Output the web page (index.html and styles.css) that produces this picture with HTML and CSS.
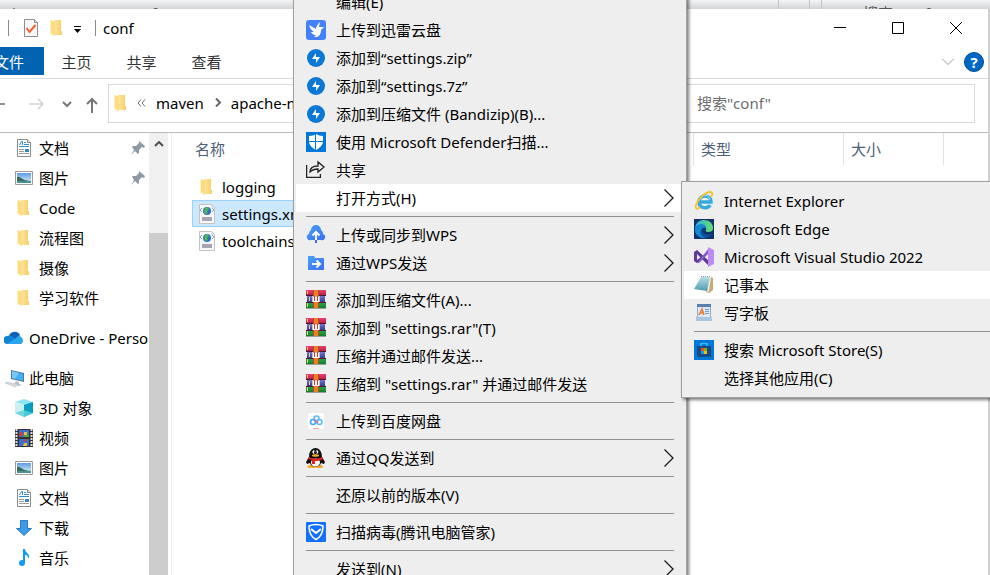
FILE: index.html
```html
<!DOCTYPE html>
<html lang="zh-CN">
<head>
    <meta charset="UTF-8">
    <meta name="viewport" content="width=device-width, initial-scale=1.0">
    <title>conf</title>
    <link rel="stylesheet" href="styles.css">
</head>
<body>

<svg class="sprite" aria-hidden="true">
    <defs>
        <linearGradient id="gFolder"><stop offset="0" stop-color="#ffe9a8"/><stop offset="1" stop-color="#f6cf66"/></linearGradient>
        <linearGradient id="gSky" x1="0" y1="0" x2="0" y2="1"><stop offset="0" stop-color="#5b9be6"/><stop offset="1" stop-color="#e4f3fb"/></linearGradient>
        <linearGradient id="gBlue" x1="0" y1="0" x2="1" y2="1"><stop offset="0" stop-color="#47a2f8"/><stop offset="1" stop-color="#3d6df5"/></linearGradient>
        <linearGradient id="gEdge" x1="0" y1="0" x2="1" y2="0"><stop offset="0" stop-color="#31b0e5"/><stop offset="1" stop-color="#63df6c"/></linearGradient>
        <linearGradient id="gNote" x1="0" y1="0" x2="0" y2="1"><stop offset="0" stop-color="#b8dde5"/><stop offset="1" stop-color="#4d9cae"/></linearGradient>
        <linearGradient id="gRed" x1="0" y1="0" x2="0" y2="1"><stop offset="0" stop-color="#ef4272"/><stop offset="1" stop-color="#b0173f"/></linearGradient>
        <linearGradient id="gIndigo" x1="0" y1="0" x2="0" y2="1"><stop offset="0" stop-color="#7373d0"/><stop offset="1" stop-color="#3b3b97"/></linearGradient>
        <linearGradient id="gGreen" x1="0" y1="0" x2="0" y2="1"><stop offset="0" stop-color="#2fb04e"/><stop offset="1" stop-color="#0f7d2c"/></linearGradient>
    </defs>
    <symbol id="folder" viewBox="0 0 18 18">
        <path fill="#f3cb62" d="M6 1h6v14H6z"/>
        <path fill="url(#gFolder)" d="M6 1h7v11h1v4H5z"/>
        <path fill="#fbdc83" d="M2 1h1l4 2v14l-4-2H2z"/>
        <path fill="#fff0bf" d="M2 1h1v13l3 2v1l-4-2z"/>
    </symbol>
    <symbol id="doc" viewBox="0 0 18 18">
        <path fill="#fff" stroke="#8b8b8b" d="M2.500 .5h10l3 3v14h-13z"/>
        <path fill="#e2e2e2" stroke="#8b8b8b" d="M12.500 .5v3h3"/>
        <path stroke="#2f8fce" fill="none" d="M4.500 6l2-3.500h1V6M9 3.500h2M9 5.500h5M4 7.500h10"/>
        <path stroke="#9b9b9b" d="M4 10.500h5M4 12.500h5M4 14.500h10"/>
        <path fill="#3c83c4" d="M10 10h4v3h-4z"/>
    </symbol>
    <symbol id="picture" viewBox="0 0 18 18">
        <path fill="#fff" stroke="#9b9b9b" d="M.5 2.500h17v13H.5z"/>
        <path fill="url(#gSky)" d="M2 4h14v10H2z"/>
        <path fill="#4b9193" d="M2 10l14 2v2H2z"/>
        <path fill="#386c59" d="M2 8c3-1 5 3 11 4H2z"/>
    </symbol>
    <symbol id="pin" viewBox="0 0 14 14">
        <path fill="#8d9aa6" d="M8 0l6 5-1 2-2-1-3 3 0 3-1 1-3-3-4 4 3-5-2-3 1-1 3 0 3-3z"/>
    </symbol>
    <symbol id="xml" viewBox="0 0 18 20">
        <path fill="#f8f8f8" stroke="#c3c3c3" d="M1.500 .5h12l3 3v16h-15z"/>
        <path fill="#ddd" d="M13 1l3 3h-3z"/>
        <circle cx="9" cy="7" r="4" fill="#2d6fc8"/>
        <path fill="#53b84e" d="M7 4l3-1 1 2-2 2 1 2-2 1-2-2z"/>
        <path stroke="#8aa0b5" fill="none" d="M4 4L2 6l2 2M14 4l2 2-2 2"/>
        <path fill="#a5a5b4" d="M4 13h10v4H4z"/>
    </symbol>
    <symbol id="winrar" viewBox="0 0 20 20">
        <path fill="url(#gRed)" d="M0 0h20v6H0z"/>
        <path fill="url(#gIndigo)" d="M1 6h18v6H1z"/>
        <path fill="url(#gGreen)" d="M0 12h20v6H0z"/>
        <path fill="#9aa59a" d="M0 18h20v1H0z"/>
        <path fill="#4a1534" d="M0 5h20v1H0zM0 12h20v1H0z"/>
        <path fill="#ecd06a" d="M1 1h1v3H1zM3 7h1v4H3zM1 13h1v4H1z"/>
        <path fill="#ef7d22" d="M7 0h6v18H7z"/>
        <path fill="#a8501f" d="M7 0h1v18H7zM12 0h1v18h-1z"/>
        <path fill="#d4bfb4" d="M6 6h8v6H6z"/>
        <path fill="#fff" d="M7 7h6v5H7z"/>
        <path fill="#c8402a" d="M8 6h1v5H8zM11 6h1v5h-1z"/>
    </symbol>
    <symbol id="bandizip" viewBox="0 0 20 20">
        <circle cx="10" cy="10" r="9" fill="#0a78d7"/>
        <path fill="#fff" d="M10 5v4h4l-4 6v-4H6z"/>
    </symbol>
    <symbol id="more" viewBox="0 0 10 18">
        <path fill="none" stroke="#1c1c1c" stroke-width="1.300" d="M.5 .5L9 9l-8.500 8.500"/>
    </symbol>
</svg>

<div class="desktop">
    <div class="back-window">
        <span>b</span>
        <span class="back-version">3/64 t</span>
        <span class="back-name">conf</span>
        <span class="back-refresh"></span>
        <span class="back-search">搜索"conf"</span>
    </div>

    <div class="window">
        <header class="titlebar">
            <span class="bar"></span>
            <svg class="quick-doc" viewBox="0 0 16 18">
                <path fill="#f7f7f7" stroke="#8f8f8f" d="M1.500 .5h10l3 3v14h-13z"/>
                <path fill="#ddd" stroke="#8f8f8f" d="M11.500 .5v3h3"/>
                <path fill="none" stroke="#f0622d" stroke-width="2" d="M3.500 9l3 4 6-7"/>
            </svg>
            <svg class="icon18 quick-folder"><use href="#folder"/></svg>
            <svg class="quick-caret" viewBox="0 0 8 8"><path d="M0 0h7v1H0zM0 3h7L3.500 7z"/></svg>
            <span class="bar"></span>
            <span class="title">conf</span>
            <div class="win-buttons">
                <button aria-label="最小化"><svg viewBox="0 0 12 12"><path d="M0 5.500h12"/></svg></button>
                <button aria-label="最大化"><svg viewBox="0 0 12 12"><path d="M.5 .5h11v11H.5z"/></svg></button>
                <button aria-label="关闭"><svg viewBox="0 0 12 12"><path d="M0 0l12 12M12 0L0 12"/></svg></button>
            </div>
        </header>

        <nav class="tabs">
            <button class="tab tab-file">文件</button>
            <button class="tab">主页</button>
            <button class="tab">共享</button>
            <button class="tab">查看</button>
            <div class="tabs-right">
                <svg class="expand" viewBox="0 0 12 7"><path d="M0 .5l6 6 6-6"/></svg>
                <button class="help" aria-label="帮助">?</button>
            </div>
        </nav>

        <div class="address-row">
            <svg class="arrows" viewBox="0 0 108 24">
                <path stroke="#6e6e6e" stroke-width="1.500" d="M0 12h5"/>
                <path stroke="#d3d3d3" stroke-width="1.500" d="M29 12h14M38 7l5 5-5 5"/>
                <path stroke="#777" stroke-width="2" d="M63 10l4 4 4-4"/>
                <path stroke="#777" stroke-width="2" d="M92 21V7M87 12l5-5 5 5"/>
            </svg>
            <div class="address">
                <svg class="icon18"><use href="#folder"/></svg>
                <svg class="crumb-back" viewBox="0 0 9 8"><path d="M4 .5L1 4l3 3.500M8 .5L5 4l3 3.500"/></svg>
                <span>maven</span>
                <svg class="crumb-sep" viewBox="0 0 6 9"><path d="M1 .5l4 4-4 4"/></svg>
                <span>apache-maven-3.8.4</span>
            </div>
            <input class="search" type="text" aria-label="搜索" placeholder='搜索"conf"'>
        </div>

        <div class="content">
            <aside class="tree">
                <a href="#"><svg class="icon18"><use href="#doc"/></svg>文档<svg class="pin"><use href="#pin"/></svg></a>
                <a href="#"><svg class="icon18"><use href="#picture"/></svg>图片<svg class="pin"><use href="#pin"/></svg></a>
                <a href="#"><svg class="icon18"><use href="#folder"/></svg>Code</a>
                <a href="#"><svg class="icon18"><use href="#folder"/></svg>流程图</a>
                <a href="#"><svg class="icon18"><use href="#folder"/></svg>摄像</a>
                <a href="#"><svg class="icon18"><use href="#folder"/></svg>学习软件</a>
                <a href="#" class="root">
                    <svg class="icon20" viewBox="0 0 20 20">
                        <path fill="#0b62b8" d="M5 8a6 6 0 0 1 11-1l-5 6z"/>
                        <path fill="#1282d7" d="M4 16a4 4 0 0 1-1-8 6 6 0 0 1 6 1l4 4-5 3z"/>
                        <path fill="#2aa7ec" d="M3 16l9-6c1-2 4-3 5-1a4 4 0 0 1 0 7z"/>
                    </svg>OneDrive - Personal</a>
                <a href="#" class="root">
                    <svg class="icon20" viewBox="0 0 20 20">
                        <path fill="#4d7795" d="M7 2l13 3v9L7 11z"/>
                        <path fill="#41b0f5" d="M8 3l11 3v7L8 10z"/>
                        <path fill="#77c8fa" d="M8 3l7 2-4 6-3-1z"/>
                        <path fill="#b9c1c8" d="M12 13l3 1v2l3 1-3 1-5-2z"/>
                        <path fill="#d5dadf" stroke="#b2bac2" stroke-width=".5" d="M1 15l3-1 10 3-3 2z"/>
                    </svg>此电脑</a>
                <a href="#">
                    <svg class="icon18" viewBox="0 0 18 18">
                        <path fill="#8ee5ee" d="M0 3l9-3 9 3-9 3z"/>
                        <path fill="#c9f1f2" d="M0 3l9 3v12l-9-4z"/>
                        <path fill="#14a8c8" d="M18 3L9 6v12l9-4z"/>
                        <path fill="#56cfd9" d="M0 14l9-3 9 3-9 4z" opacity=".8"/>
                        <path fill="#0797bd" d="M9 6l9-3v11l-9-3z" opacity=".7"/>
                    </svg>3D 对象</a>
                <a href="#">
                    <svg class="icon18" viewBox="0 0 18 18">
                        <path fill="#333" d="M0 0h18v18H0z"/>
                        <path stroke="#ddd" stroke-width="2" stroke-dasharray="2 1" d="M1.500 0v18M16.500 0v18"/>
                        <path fill="#3d6fd1" d="M4 1h10v7H4zM4 10h10v7H4z"/>
                        <path fill="#d43a3a" d="M4 5l3-3 1 5H4zM8 11l5-1-3 3z"/>
                        <path fill="#e9c22c" d="M9 3h3v3H9zM9 14h3v3H8z"/>
                        <path fill="#49a948" d="M9 6h5v2H8z"/>
                    </svg>视频</a>
                <a href="#"><svg class="icon18"><use href="#picture"/></svg>图片</a>
                <a href="#"><svg class="icon18"><use href="#doc"/></svg>文档</a>
                <a href="#">
                    <svg class="icon18" viewBox="0 0 18 18"><path fill="#3d9be9" stroke="#2b7cc4" d="M5.500 1.500h7v8h4L9 16.500 1.500 9.500h4z"/></svg>下载</a>
                <a href="#">
                    <svg class="icon18" viewBox="0 0 18 18">
                        <path fill="#109bf5" d="M8 0h2c0 4 5 4 4 9h-1c0-3-2-3-3-3v8H8z"/>
                        <ellipse cx="7" cy="14" rx="3" ry="3" fill="#109bf5"/>
                    </svg>音乐</a>
            </aside>
            <div class="scroll">
                <svg viewBox="0 0 10 6"><path d="M1 5l4-4 4 4"/></svg>
                <div class="thumb"></div>
            </div>
            <main class="files">
                <table>
                    <thead>
                        <tr><th class="col-name">名称</th><th class="col-type">类型</th><th class="col-size">大小</th><th></th></tr>
                    </thead>
                    <tbody>
                        <tr><td><span class="file"><svg class="icon18"><use href="#folder"/></svg>logging</span></td></tr>
                        <tr><td class="selected"><span class="file"><svg class="icon-file"><use href="#xml"/></svg>settings.xml</span></td></tr>
                        <tr><td><span class="file"><svg class="icon-file"><use href="#xml"/></svg>toolchains.xml</span></td></tr>
                    </tbody>
                </table>
            </main>
        </div>
    </div>

    <div class="menu context">
        <button class="item"><span class="ico"></span>编辑(E)</button>
        <button class="item"><svg class="ico" viewBox="0 0 20 20">
            <rect width="20" height="20" rx="3" fill="#4480fb"/>
            <path fill="#fff" d="M3 5l7 4c0-3 2-5 4-7l-1 5 5 0-3 3c0 3-1 6-4 7H8l2-2c-3 0-4-1-5-3h3C5 10 4 8 3 5z"/>
        </svg>上传到迅雷云盘</button>
        <button class="item"><svg class="ico"><use href="#bandizip"/></svg>添加到“settings.zip”</button>
        <button class="item"><svg class="ico"><use href="#bandizip"/></svg>添加到“settings.7z”</button>
        <button class="item"><svg class="ico"><use href="#bandizip"/></svg>添加到压缩文件 (Bandizip)(B)...</button>
        <button class="item"><svg class="ico" viewBox="0 0 20 20">
            <path fill="#0078d7" d="M0 0h20v20H0z"/>
            <path fill="#fff" d="M10 2c2 1 4 2 7 2v5c0 4-3 7-7 9-4-2-7-5-7-9V4c3 0 5-1 7-2z"/>
            <path stroke="#0078d7" d="M9.500 1v18M2 9.500h16"/>
        </svg>使用 Microsoft Defender扫描...</button>
        <button class="item"><svg class="ico" viewBox="0 0 20 20">
            <path fill="none" stroke="#222" stroke-width="1.300" d="M.6 5v12.400h13.800V14M4 12c0-4 3-6 8-6V2l6 5-6 5V9c-4 0-6 1-8 3z"/>
        </svg>共享</button>
        <button class="item active"><span class="ico"></span>打开方式(H)<svg class="more"><use href="#more"/></svg></button>
        <hr>
        <button class="item"><svg class="ico" viewBox="0 0 20 20">
            <path fill="url(#gBlue)" d="M5 15a3 3 0 0 1-2-6 4 4 0 0 1 2-4 5 5 0 0 1 10 0 4 4 0 0 1 2 4 3 3 0 0 1-2 6z"/>
            <path fill="none" stroke="#fff" stroke-width="2" d="M10 15V7M6.500 10.500L10 7l3.500 3.500"/>
            <path stroke="#3d6df5" stroke-width="2" d="M10 15v3"/>
        </svg>上传或同步到WPS<svg class="more"><use href="#more"/></svg></button>
        <button class="item"><svg class="ico" viewBox="0 0 20 20">
            <path fill="url(#gBlue)" d="M2 3h6l1 2h9v12H2z"/>
            <path fill="none" stroke="#fff" stroke-width="2" d="M6 11h8M10.500 7.500L14 11l-3.500 3.500"/>
        </svg>通过WPS发送<svg class="more"><use href="#more"/></svg></button>
        <hr>
        <button class="item"><svg class="ico"><use href="#winrar"/></svg>添加到压缩文件(A)...</button>
        <button class="item"><svg class="ico"><use href="#winrar"/></svg>添加到 "settings.rar"(T)</button>
        <button class="item"><svg class="ico"><use href="#winrar"/></svg>压缩并通过邮件发送...</button>
        <button class="item"><svg class="ico"><use href="#winrar"/></svg>压缩到 "settings.rar" 并通过邮件发送</button>
        <hr>
        <button class="item"><svg class="ico" viewBox="0 0 20 20">
            <rect x="2" y="2" width="16" height="16" rx="3" fill="#fff"/>
            <g fill="none" stroke-width="1.600">
                <circle cx="10.500" cy="7.500" r="2.500" stroke="#5fb8f5"/>
                <circle cx="7" cy="11" r="2.500" stroke="#3ca7f6"/>
                <circle cx="13.500" cy="11" r="2.500" stroke="#57c0f5"/>
                <path stroke="#f06b7e" d="M9 9l3 3"/>
                <path stroke="#f4a5b0" stroke-width="1" d="M7 17.500h6"/>
            </g>
        </svg>上传到百度网盘</button>
        <hr>
        <button class="item"><svg class="ico" viewBox="0 0 20 20">
            <ellipse cx="5.500" cy="18.500" rx="4" ry="1.500" fill="#f6a51c"/>
            <ellipse cx="13" cy="18.500" rx="4" ry="1.500" fill="#f6a51c"/>
            <path fill="#111" d="M3 9c0-12 13-12 13 0l3 5-1 2-3-1c-1 5-10 5-11 0l-3 1-1-2z"/>
            <ellipse cx="9.500" cy="14.500" rx="4.500" ry="4" fill="#fff"/>
            <ellipse cx="7.700" cy="4" rx="1.300" ry="1.800" fill="#fff"/>
            <ellipse cx="11" cy="4" rx="1.300" ry="1.800" fill="#fff"/>
            <path fill="#111" d="M8 3.500h1v1.500H8zM10 3.500h1v1.500h-1z"/>
            <ellipse cx="9.500" cy="7.500" rx="3.500" ry="1.200" fill="#f6b21c"/>
            <path fill="#e3231c" d="M3 9c4 2 9 2 13 0l1 2c-3 2-6 2-8 2v3H6v-4l-4-1z"/>
        </svg>通过QQ发送到<svg class="more"><use href="#more"/></svg></button>
        <hr>
        <button class="item"><span class="ico"></span>还原以前的版本(V)</button>
        <hr>
        <button class="item"><svg class="ico" viewBox="0 0 20 20">
            <rect width="20" height="20" rx="1" fill="#146ffa"/>
            <path fill="none" stroke="#fff" stroke-width="1.500" d="M10 2.500c3 0 5 .5 7 1.500 0 6-2 11-7 13.500C5 15 3 10 3 4c2-1 4-1.500 7-1.500z"/>
            <path fill="none" stroke="#fff" stroke-width="2" d="M5 7l5 4 5-4"/>
        </svg>扫描病毒(腾讯电脑管家)</button>
        <hr>
        <button class="item"><span class="ico"></span>发送到(N)<svg class="more"><use href="#more"/></svg></button>
    </div>

    <div class="menu submenu">
        <button class="item"><svg class="ico" viewBox="0 0 20 20">
            <path fill="none" stroke="#36a9df" stroke-width="3.500" d="M5 11h12c0-8-12-8-12 0 0 7 9 7 11 3"/>
            <path fill="none" stroke="#a2dcf4" stroke-width="1" d="M5 10c0-7 10-8 11-1"/>
            <path fill="none" stroke="#f4c42d" stroke-width="1.800" d="M6 16c-3 3-5 2-4-2C4 8 11 1 16 1c3 0 3 2 1 5"/>
        </svg>Internet Explorer</button>
        <button class="item"><svg class="ico" viewBox="0 0 20 20">
            <path fill="#10336c" d="M0 0h20v20H0z"/>
            <path fill="url(#gEdge)" d="M1 9C2 3 6 1 10 1c6 0 9 4 9 8 0 3-2 4-5 4-2 0-3-1-2-2 1-3-2-5-5-5-3 0-5 1-6 3z"/>
            <path fill="#1586d1" d="M1 9c1-3 4-4 7-4 3 1 4 2 4 4-3-1-5 1-5 4s3 6 6 6C6 20 0 16 1 9z"/>
            <path fill="#0d4d9a" d="M9 9c-2 4 1 8 9 6-2 3-5 4-7 3-5-1-6-7-2-9z"/>
        </svg>Microsoft Edge</button>
        <button class="item"><svg class="ico" viewBox="0 0 20 20">
            <path fill="#5c3b98" d="M0 5l3-2 12 11v5L3 7v6l4-3 2 2-6 4-3-2z"/>
            <path fill="#8659c9" d="M3 16l12-15v5L5 16z"/>
            <path fill="#bd8cf3" d="M14 0l6 3v14l-6 3z"/>
        </svg>Microsoft Visual Studio 2022</button>
        <button class="item active"><svg class="ico" viewBox="0 0 20 20">
            <path fill="#c7a878" d="M17 2l2 1v12l-4 3-3-1z"/>
            <path fill="#f5f0e4" d="M17 2l-2 14-2 1 3-15z"/>
            <path fill="url(#gNote)" d="M7 2l9 0-3 14L0 14z"/>
            <path stroke="#87979d" stroke-dasharray="1 1" d="M7 1.500h10"/>
        </svg>记事本</button>
        <button class="item"><svg class="ico" viewBox="0 0 20 20">
            <path fill="#dbe8f5" stroke="#8aaed3" d="M3.500 1.500h13v16h-13z"/>
            <path fill="#567fae" d="M3 1h14v3H3z"/>
            <path fill="none" stroke="#ed7d31" stroke-width="1.600" d="M5 12l3-6 2 6M6 10h3"/>
            <path stroke="#6f9fd6" d="M11 6.500h4M11 8.500h4M11 10.500h4"/>
            <path fill="#a9c5e2" d="M2 14h16v4H2z"/>
        </svg>写字板</button>
        <hr>
        <button class="item"><svg class="ico" viewBox="0 0 20 20">
            <path fill="#0078d7" d="M0 0h20v20H0z"/>
            <path fill="none" stroke="#45b5f2" stroke-width="1.500" d="M7 6V3.500h6V6"/>
            <rect x="3" y="6" width="14" height="11" rx="1" fill="#164a85"/>
            <path fill="#f25022" d="M7 8h3v3H7z"/><path fill="#7fba00" d="M10 8h3v3h-3z"/>
            <path fill="#00a4ef" d="M7 11h3v3H7z"/><path fill="#ffb900" d="M10 11h3v3h-3z"/>
        </svg>搜索 Microsoft Store(S)</button>
        <button class="item"><span class="ico"></span>选择其他应用(C)</button>
    </div>
</div>

</body>
</html>
```

FILE: styles.css
```css
* { box-sizing: border-box; }
body { margin: 0; font-family: "Noto Sans", "Noto Sans CJK SC", sans-serif; font-size: 15px; line-height: 20px; color: #000; }
button { font: inherit; color: inherit; background: none; border: 0; padding: 0; margin: 0; }
a { color: inherit; text-decoration: none; }
svg { flex: none; }
.sprite { position: absolute; width: 0; height: 0; }
.icon18 { width: 18px; height: 18px; }
.icon20 { width: 20px; height: 20px; }
.icon-file { width: 18px; height: 20px; }

.desktop { position: relative; display: flex; flex-direction: column; height: 100vh; overflow: hidden; background: #d0d0d0; }

/* window behind, only its lower edge shows */
.back-window { display: flex; height: 9px; padding: 3px 0 0 12px; overflow: hidden; background: linear-gradient(#f4f5f6, #d4d5d6); color: #555; }
.back-version { margin-left: 56px; }
.back-name { margin-left: 8px; }
.back-refresh { width: 32px; height: 20px; margin: -3px 11px 0 auto; border: 1px solid #c4c4c4; border-width: 0 1px; }
.back-search { width: 169px; height: 20px; margin-top: -3px; padding: 3px 0 0 41px; border-left: 1px solid #c4c4c4; }

.window { flex: 1; min-height: 0; display: flex; flex-direction: column; margin-right: 2px; background: #fff; }

.titlebar { display: flex; align-items: center; height: 38px; padding-left: 8px; }
.bar { width: 1px; height: 16px; background: #8c8c8c; }
.quick-doc { width: 16px; height: 18px; margin-left: 14px; }
.quick-folder { margin-left: 9px; }
.quick-caret { width: 8px; height: 8px; margin: 4px 13px 0 8px; }
.title { margin-left: 7px; }
.win-buttons { display: flex; margin: 0 3px 0 auto; }
.win-buttons button { display: flex; align-items: center; justify-content: center; width: 58px; height: 38px; }
.win-buttons svg { width: 12px; height: 12px; fill: none; stroke: #000; }

.tabs { display: flex; height: 32px; border-bottom: 1px solid #dadbdc; color: #333; }
.tab { width: 65px; height: 30px; }
.tab-file { width: 44px; height: 28px; padding: 1px 26px 0 0; background: #0063b1; color: #fff; display: flex; justify-content: center; white-space: nowrap; align-items: center; }
.tabs-right { display: flex; align-items: center; gap: 10px; margin-left: auto; padding: 0 4px 2px 0; }
.expand { width: 12px; height: 7px; fill: none; stroke: #999; }
.help { width: 20px; height: 20px; border: 1px solid #004c8f; border-radius: 50%; background: #0067c5; color: #fff; font-weight: bold; line-height: 18px; }

.address-row { display: flex; align-items: center; height: 54px; padding: 5px 13px 9px 0; border-bottom: 1px solid #bcbcbc; }
.arrows { width: 108px; height: 24px; fill: none; }
.address { flex: 1; display: flex; align-items: center; height: 39px; padding: 0 0 2px 3px; border: 1px solid #d9d9d9; }
.crumb-back { width: 9px; height: 8px; margin: 0 10px 0 7px; fill: none; stroke: #666; }
.crumb-sep { width: 6px; height: 9px; margin: 0 10px 0 11px; fill: none; stroke: #666; stroke-width: 2; }
.search { width: 299px; height: 39px; margin-left: 12px; padding: 0 20px 2px; border: 1px solid #d9d9d9; font: inherit; background: #fff; }
.search::placeholder { color: #6d6d6d; opacity: 1; }

.content { flex: 1; min-height: 0; display: flex; overflow: hidden; }
.tree { width: 149px; flex: none; overflow: hidden; }
.tree a { display: flex; align-items: center; gap: 6px; height: 30px; padding-left: 15px; white-space: nowrap; }
.tree .root { gap: 5px; height: 30px; margin: 10px 0; padding-left: 4px; }
.tree .root + a { margin-top: 0; }
.tree .root + .root { margin-bottom: 0; }
.pin { width: 14px; height: 14px; margin: 0 4px 0 auto; }
.scroll { display: flex; flex-direction: column; align-items: center; width: 19px; flex: none; background: #f0f0f0; }
.scroll svg { width: 10px; height: 6px; margin: 8px 0 86px; fill: none; stroke: #505050; stroke-width: 2; }
.thumb { flex: 1; width: 19px; background: #cdcdcd; }

.files { flex: 1; margin-left: 3px; padding-left: 20px; border-left: 1px solid #eee; }
table { width: 100%; table-layout: fixed; border-collapse: separate; border-spacing: 0; }
th { height: 32px; padding: 0 0 0 7px; border-right: 1px solid #e2e2e2; font-weight: normal; text-align: left; color: #4c607a; }
th:first-child { padding-left: 3px; }
th:last-child { border-right: 0; }
.col-name { width: 502px; }
.col-type { width: 150px; }
.col-size { width: 100px; }
tbody::before { content: ""; display: block; height: 8px; }
td { height: 27px; padding: 0; border: 1px solid transparent; }
.selected { background: #cce8ff; border-color: #99d1ff; }
.file { display: flex; align-items: center; gap: 6px; padding-left: 5px; }

.menu { position: absolute; background: #eee; border: 1px solid #a0a0a0; padding: 5px 2px; box-shadow: 2px 2px 3px rgba(0, 0, 0, .5); }
.context { left: 293px; top: -18px; width: 394px; }
.submenu { left: 681px; top: 181px; width: 340px; }
.item { display: flex; align-items: center; gap: 10px; width: 100%; height: 28px; padding: 0 10px; text-align: left; white-space: nowrap; }
.item.active { background: #fff; }
.ico { width: 20px; height: 20px; flex: none; }
.more { width: 10px; height: 18px; margin-left: auto; }
.menu hr { height: 1px; margin: 4px 10px; border: 0; background: #919191; }
```
